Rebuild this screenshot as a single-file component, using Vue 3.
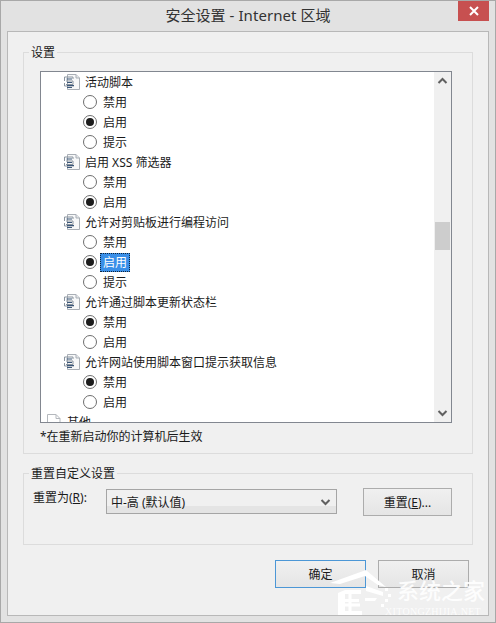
<script setup>
const rows = [
  { kind: 'head', text: '活动脚本' },
  { kind: 'opt', text: '禁用' },
  { kind: 'opt', text: '启用', on: true },
  { kind: 'opt', text: '提示' },
  { kind: 'head', text: '启用 XSS 筛选器' },
  { kind: 'opt', text: '禁用' },
  { kind: 'opt', text: '启用', on: true },
  { kind: 'head', text: '允许对剪贴板进行编程访问' },
  { kind: 'opt', text: '禁用' },
  { kind: 'opt', text: '启用', on: true, sel: true },
  { kind: 'opt', text: '提示' },
  { kind: 'head', text: '允许通过脚本更新状态栏' },
  { kind: 'opt', text: '禁用', on: true },
  { kind: 'opt', text: '启用' },
  { kind: 'head', text: '允许网站使用脚本窗口提示获取信息' },
  { kind: 'opt', text: '禁用', on: true },
  { kind: 'opt', text: '启用' },
  { kind: 'other', text: '其他' },
]
</script>

<template>
  <div class="window">
    <header class="titlebar">
      <span class="title">安全设置 - Internet 区域</span>
      <button class="close" aria-label="关闭">
        <svg width="12" height="10" viewBox="0 0 12 10"><path d="M2 1 L10 9 M10 1 L2 9" stroke="#fff" stroke-width="2" fill="none" /></svg>
      </button>
    </header>

    <main class="client">
      <fieldset class="group settings">
        <legend>设置</legend>
        <div class="listbox">
          <div class="rows">
            <div v-for="(r, i) in rows" :key="i" class="row" :class="r.kind">
              <template v-if="r.kind === 'opt'">
                <span class="radio" :class="{ on: r.on }"></span>
                <span class="label" :class="{ sel: r.sel }">{{ r.text }}</span>
              </template>
              <template v-else-if="r.kind === 'head'">
                <svg class="doc" width="18" height="18" viewBox="0 0 18 18">
                  <path d="M4.5 1.5 H13 L16.5 5 V16.5 H4.5 Z" fill="#f7f8f9" stroke="#a9afb6" />
                  <path d="M13 1.5 V5 H16.5" fill="#e4e7ea" stroke="#a9afb6" />
                  <path d="M1.5 4 H10 M1.5 4 V8 M10 4 V6 M3 8 H10 V11.5 M10 11.5 H3 M1.5 10 V13 M1.5 13 H11" fill="none" stroke="#8a949f" stroke-width="1" />
                  <path d="M3.5 6 H9 M4 9.5 H9 M4 12.5 H11 M4 14.5 H9" fill="none" stroke="#3d587a" stroke-width="1.2" />
                </svg>
                <span class="label">{{ r.text }}</span>
              </template>
              <template v-else>
                <svg class="doc" width="18" height="18" viewBox="0 0 18 18">
                  <path d="M1.5 1.5 H10 L14 5.5 V17.5 H1.5 Z" fill="#fff" stroke="#b4b8bd" />
                  <path d="M10 1.5 V5.5 H14" fill="none" stroke="#b4b8bd" />
                </svg>
                <span class="label">{{ r.text }}</span>
              </template>
            </div>
          </div>
          <div class="scrollbar">
            <svg class="arrow" width="11" height="8" viewBox="0 0 11 8"><path d="M1.5 6 L5.5 2 L9.5 6" fill="none" stroke="#606060" stroke-width="2" /></svg>
            <div class="track"><div class="thumb"></div></div>
            <svg class="arrow" width="11" height="8" viewBox="0 0 11 8"><path d="M1.5 2 L5.5 6 L9.5 2" fill="none" stroke="#606060" stroke-width="2" /></svg>
          </div>
        </div>
        <p class="note">*在重新启动你的计算机后生效</p>
      </fieldset>

      <fieldset class="group reset">
        <legend>重置自定义设置</legend>
        <div class="reset-row">
          <label class="reset-label">重置为(<u>R</u>):</label>
          <div class="select">
            <span>中-高 (默认值)</span>
            <svg width="11" height="8" viewBox="0 0 11 8"><path d="M1.5 2 L5.5 6 L9.5 2" fill="none" stroke="#606060" stroke-width="2" /></svg>
          </div>
          <button class="btn reset-btn">重置(<u>E</u>)...</button>
        </div>
      </fieldset>

      <footer class="actions">
        <button class="btn primary">确定</button>
        <button class="btn">取消</button>
      </footer>
    </main>

    <svg class="wm-logo" width="72" height="50" viewBox="0 0 72 50">
      <path d="M5 15 L41 2 L61 19 L53 17 L40 8 L15 16 Z" fill="#fff" />
      <path d="M13 25 L20 22 H36 V26 H20 V31 H34 V34 H20 V43 H37 V47 H13 Z" fill="#fff" />
      <path d="M25 25 V46 M20 37 H35" stroke="#fff" stroke-width="3" />
      <path d="M41 18 L58 24 V28 L41 23 Z M40 30 L52 30 L50 33 L40 33 Z" fill="#fff" />
      <path d="M60 20 h3 v3 h-3 z M63 26 h3 v3 h-3 z M60 31 h3 v3 h-3 z M56 36 h3 v3 h-3 z" fill="#fff" />
    </svg>
    <span class="wm-cn">系统之家</span>
    <span class="wm-en">XITONGZHIJIA.NET</span>
  </div>
</template>

<style>
html, body { margin: 0; padding: 0; background: #e3e3e3; }
</style>

<style scoped>
* { box-sizing: border-box; }
.window {
  position: relative;
  width: 496px;
  height: 623px;
  background: #e2e2e2;
  border: 1px solid #a8a8a8;
  padding: 0 6px 6px 6px;
  display: flex;
  flex-direction: column;
  overflow: hidden;
  font: 12px "Noto Sans", "Noto Sans CJK SC", sans-serif;
  color: #1a1a1a;
}
.titlebar {
  height: 30px;
  flex: none;
  position: relative;
  display: flex;
  align-items: flex-start;
  justify-content: center;
}
.title {
  font-size: 15px;
  line-height: 29px;
  color: #333;
  letter-spacing: 0.06px;
}
.close {
  position: absolute;
  right: 0;
  top: 0;
  width: 31px;
  height: 20px;
  padding: 0;
  border: none;
  background: #c75050;
  display: flex;
  align-items: center;
  justify-content: center;
}
.client {
  flex: 1;
  width: 482px;
  background: #f0f0f0;
  border: 1px solid #b8b8b8;
  padding: 12px 15px 0 15px;
  display: flex;
  flex-direction: column;
}
.group {
  margin: 0;
  border: 1px solid #dcdcdc;
  padding: 0;
  min-width: 0;
}
.group legend {
  padding: 0 2px;
  font-size: 12px;
  line-height: 17px;
  color: #1a1a1a;
}
.settings legend { margin-left: -11px; }
.reset legend { margin-left: -3px; }
.settings { height: 410px; padding: 10px 20px 0 16px; }
.listbox {
  height: 352px;
  border: 1px solid #828790;
  background: #fff;
  display: flex;
  overflow: hidden;
}
.rows { flex: 1; min-width: 0; }
.row {
  height: 20px;
  display: flex;
  align-items: center;
  white-space: nowrap;
  line-height: 20px;
}
.row.head { padding-left: 22px; }
.row.head .doc { margin-right: 4px; }
.row.head .label, .row.other .label { position: relative; top: 1px; }
.row.opt { padding-left: 42px; }
.row.other { padding-left: 5px; }
.row.other .doc { margin-right: 3px; }
.radio {
  width: 14px;
  height: 14px;
  border-radius: 50%;
  border: 1px solid #6e6e6e;
  background: #fff;
  flex: none;
  margin-right: 3px;
  position: relative;
}
.radio.on::after {
  content: "";
  position: absolute;
  left: 2px;
  top: 2px;
  width: 8px;
  height: 8px;
  border-radius: 50%;
  background: #1c1c1c;
}
.row.opt .label { padding: 0 2px; height: 19px; line-height: 17px; border: 1px solid transparent; }
.row.opt .label.sel {
  background: #3a8fe8;
  color: #fff;
  border: 1px dotted #10243a;
}
.scrollbar {
  width: 17px;
  flex: none;
  background: #f0f0f0;
  display: flex;
  flex-direction: column;
  align-items: center;
  padding: 5px 0 5px 0;
}
.arrow { flex: none; }
.track { flex: 1; width: 15px; padding-top: 137px; }
.thumb { width: 15px; height: 28px; background: #cdcdcd; }
.note {
  margin: 4px 0 0 0;
  line-height: 20px;
  color: #1a1a1a;
}
.reset { height: 80px; margin-top: 11px; padding: 7px 20px 0 8px; }
.reset-row { display: flex; align-items: flex-start; }
.reset-label { width: 74px; line-height: 20px; padding-left: 1px; margin-top: -1px; }
.reset-label u, .btn u { text-underline-offset: 1px; }
.select {
  width: 231px;
  height: 25px;
  border: 1px solid #a5a5a5;
  background: linear-gradient(#f0f0f0 70%, #e4e4e4 70%);
  display: flex;
  align-items: center;
  justify-content: space-between;
  padding: 0 5px 0 4px;
  font-size: 12px;
}
.btn {
  font: inherit;
  color: #1a1a1a;
  width: 91px;
  height: 28px;
  padding: 0;
  border: 1px solid #acacac;
  background: linear-gradient(#f0f0f0, #e5e5e5);
}
.reset-btn { width: 89px; margin-left: 26px; margin-top: -1px; }
.actions { display: flex; justify-content: flex-end; gap: 12px; margin-top: 15px; padding-right: 4px; }
.primary { border-color: #4c97d6; }
.wm-logo { position: absolute; left: 324px; top: 567px; }
.wm-cn {
  position: absolute;
  left: 396px;
  top: 575px;
  font: 500 22px/26px "Noto Sans CJK SC", sans-serif;
  color: #fff;
  opacity: 0.9;
}
.wm-en {
  position: absolute;
  left: 384px;
  top: 605px;
  font: 10px/12px "Liberation Serif", serif;
  letter-spacing: 0.3px;
  color: #fff;
  opacity: 0.85;
}
</style>
